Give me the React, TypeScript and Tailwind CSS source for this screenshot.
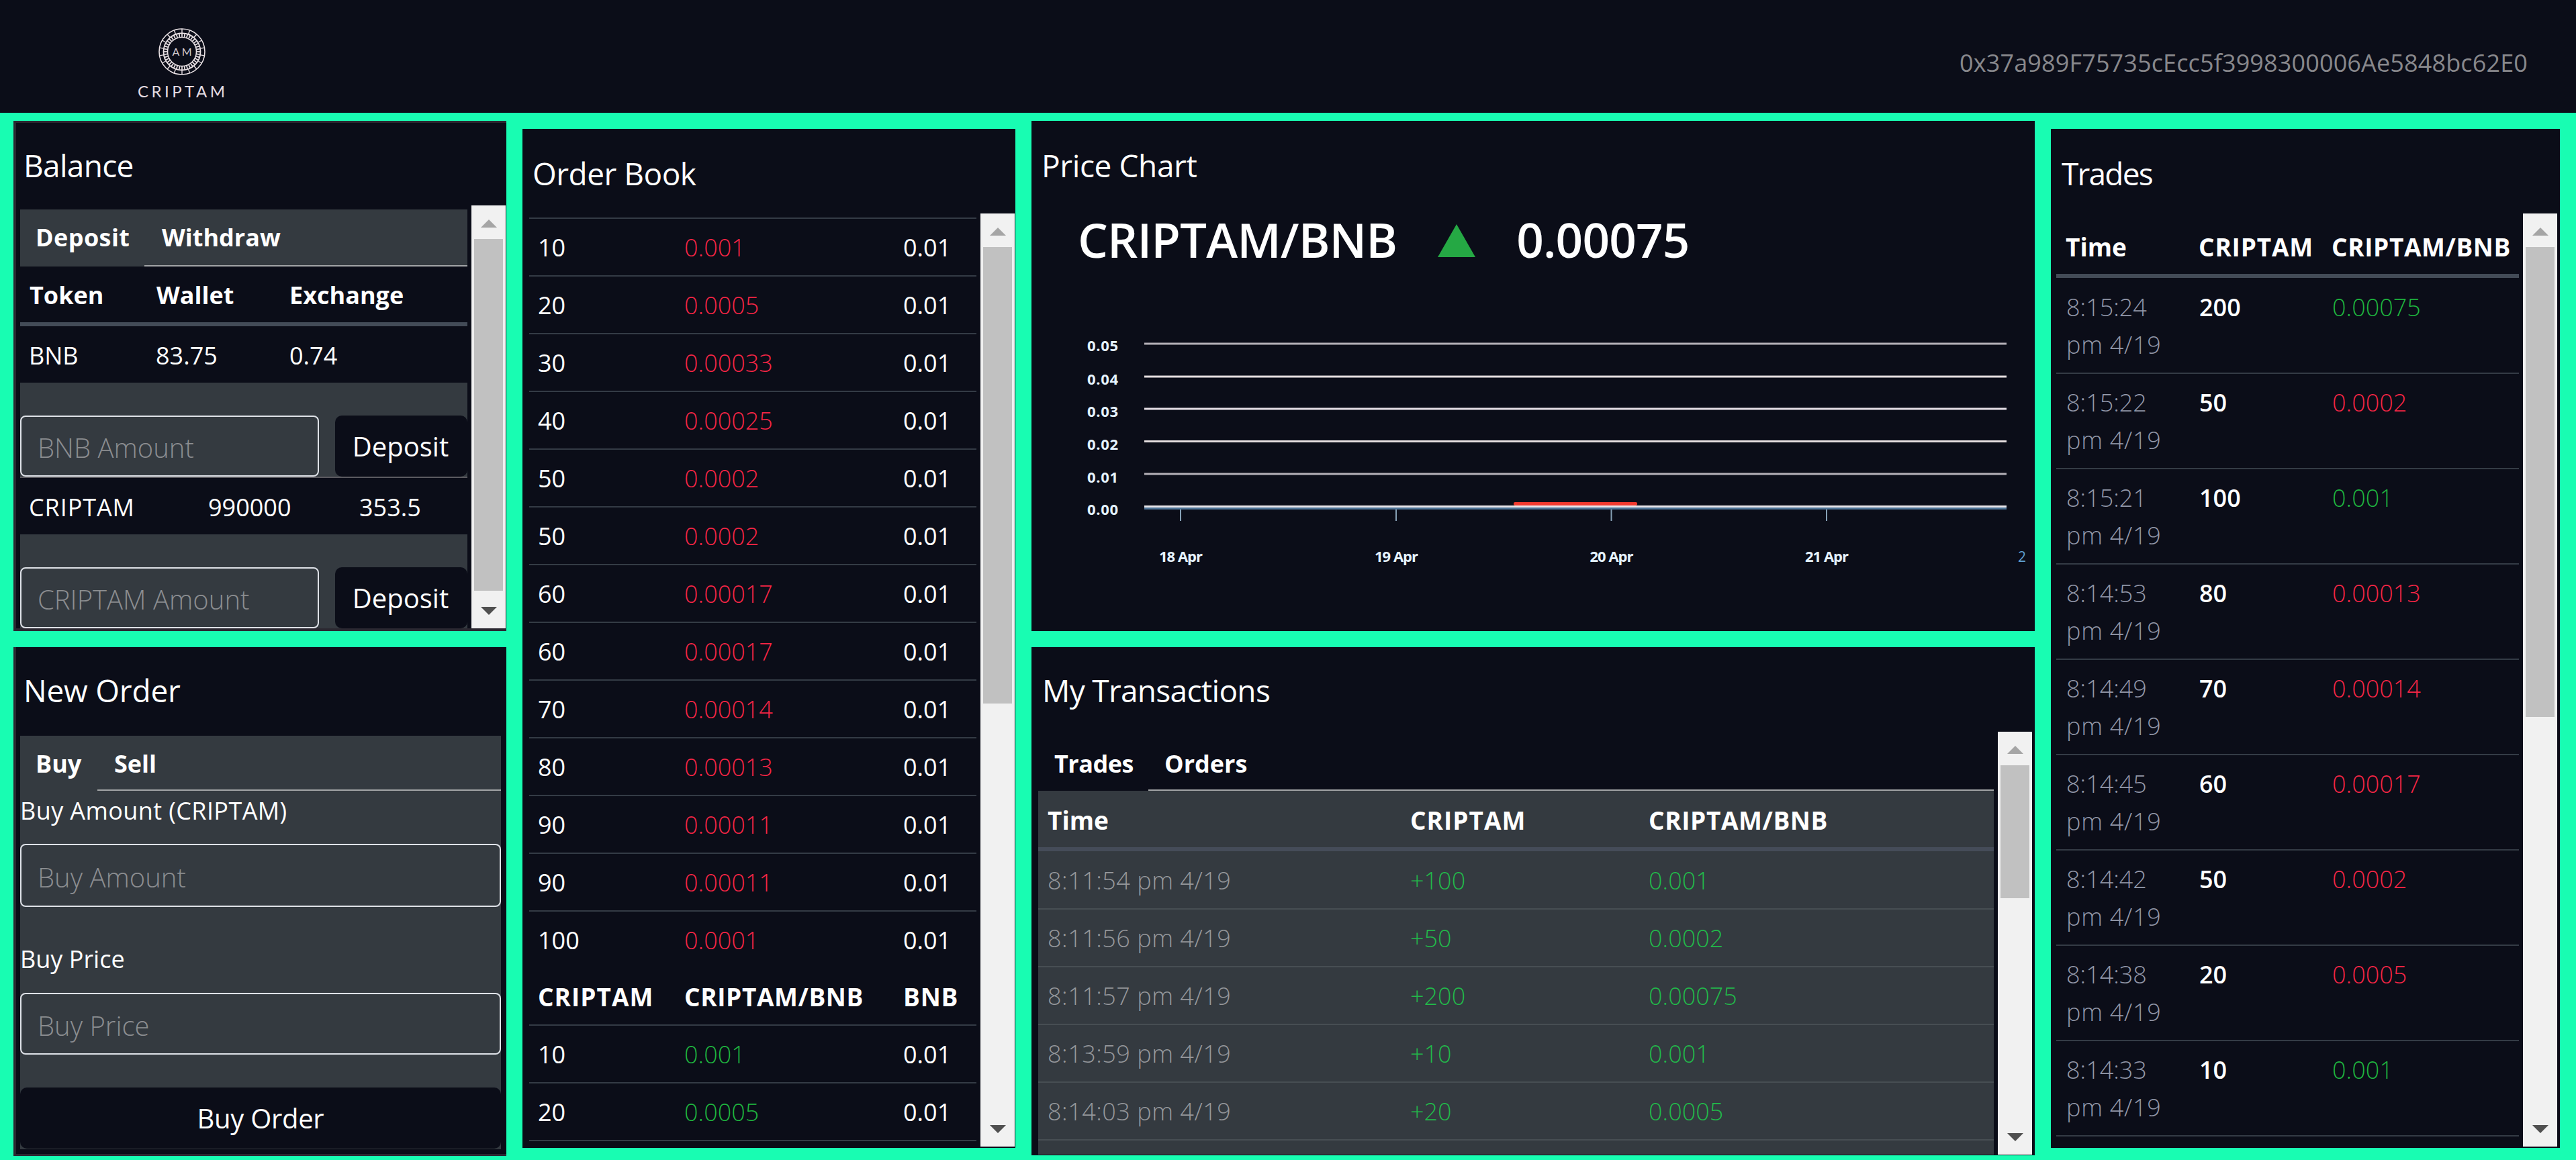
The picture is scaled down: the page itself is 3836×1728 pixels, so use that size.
import type { ReactNode } from "react";

type Side = "buy" | "sell";
type Level = [amount: string, price: string, total: string];

const asks: Level[] = [
  ["10", "0.001", "0.01"],
  ["20", "0.0005", "0.01"],
  ["30", "0.00033", "0.01"],
  ["40", "0.00025", "0.01"],
  ["50", "0.0002", "0.01"],
  ["50", "0.0002", "0.01"],
  ["60", "0.00017", "0.01"],
  ["60", "0.00017", "0.01"],
  ["70", "0.00014", "0.01"],
  ["80", "0.00013", "0.01"],
  ["90", "0.00011", "0.01"],
  ["90", "0.00011", "0.01"],
  ["100", "0.0001", "0.01"],
];

const bids: Level[] = [
  ["10", "0.001", "0.01"],
  ["20", "0.0005", "0.01"],
];

const trades: [time: string, amount: string, price: string, side: Side][] = [
  ["8:15:24", "200", "0.00075", "buy"],
  ["8:15:22", "50", "0.0002", "sell"],
  ["8:15:21", "100", "0.001", "buy"],
  ["8:14:53", "80", "0.00013", "sell"],
  ["8:14:49", "70", "0.00014", "sell"],
  ["8:14:45", "60", "0.00017", "sell"],
  ["8:14:42", "50", "0.0002", "sell"],
  ["8:14:38", "20", "0.0005", "sell"],
  ["8:14:33", "10", "0.001", "buy"],
];

const myTrades: [time: string, amount: string, price: string][] = [
  ["8:11:54 pm 4/19", "+100", "0.001"],
  ["8:11:56 pm 4/19", "+50", "0.0002"],
  ["8:11:57 pm 4/19", "+200", "0.00075"],
  ["8:13:59 pm 4/19", "+10", "0.001"],
  ["8:14:03 pm 4/19", "+20", "0.0005"],
];

const sideColor: Record<Side, string> = {
  buy: "font-light text-[#1fb53f]",
  sell: "font-light text-[#f52545]",
};

function Logo() {
  const spokes = Array.from({ length: 18 }, (_, i) => i * 20);
  const ticks = Array.from({ length: 40 }, (_, i) => i * 9);
  return (
    <svg width="140" height="124" viewBox="-70 -46 140 124" fill="none" stroke="#e9e1e4">
      <circle r="34" strokeWidth="1.6" />
      <circle r="27.5" strokeWidth="1.8" />
      <circle r="21.5" strokeWidth="1.6" />
      {spokes.map((a) => (
        <line key={a} x1="0" y1="-34" x2="0" y2="-28" strokeWidth="1.4" transform={`rotate(${a})`} />
      ))}
      {ticks.map((a) => (
        <line key={a} x1="0" y1="-27" x2="0" y2="-22" strokeWidth="1.7" transform={`rotate(${a})`} />
      ))}
      <text x="-14.5" y="5.5" textLength="29" fontSize="16" fontFamily="Lato, sans-serif" fill="#d6cdd3" stroke="none">
        AM
      </text>
      <text x="-66" y="67.5" textLength="130" fontSize="24" fontFamily="Lato, sans-serif" fill="#e4dce2" stroke="none">
        CRIPTAM
      </text>
    </svg>
  );
}

function Scrollbar({ thumb }: { thumb: string }) {
  return (
    <div className="flex w-[51px] shrink-0 flex-col bg-[#f1f1f1]">
      <div className="flex h-[50px] shrink-0 items-center justify-center pt-[3px]">
        <svg width="24" height="12" viewBox="0 0 24 12">
          <path d="M12 0 24 12H0Z" fill="#a5a5a5" />
        </svg>
      </div>
      <div className={`mx-1 bg-[#c1c1c1] ${thumb}`} />
      <div className="flex-1" />
      <div className="flex h-[52px] shrink-0 items-center justify-center">
        <svg width="24" height="12" viewBox="0 0 24 12">
          <path d="M12 12 24 0H0Z" fill="#505050" />
        </svg>
      </div>
    </div>
  );
}

function Card({ className, title, titleClass, children }: { className: string; title: string; titleClass: string; children: ReactNode }) {
  return (
    <section className={`flex flex-col overflow-hidden bg-[#0b0d18] ${className}`}>
      <h2 className={`h-[126px] shrink-0 text-[46px] leading-[60px] ${titleClass}`}>{title}</h2>
      {children}
    </section>
  );
}

function Tabs({ first, second, firstClass, secondClass, className }: { first: string; second: string; firstClass: string; secondClass: string; className: string }) {
  return (
    <div className={`flex shrink-0 font-bold leading-[84px] ${className}`}>
      <div className={firstClass}>{first}</div>
      <div className={`flex-1 border-b-2 border-[#a3a5a7] ${secondClass}`}>{second}</div>
    </div>
  );
}

const field =
  "min-w-0 rounded-[8px] border-2 border-[#dfe2e8] bg-transparent px-[24px] pt-1 text-[40px] font-light outline-none placeholder:text-[#8b8d90]";

function DepositForm({ token, className }: { token: string; className: string }) {
  return (
    <div className={`flex shrink-0 items-start justify-between bg-[#343a40] pt-[49px] ${className}`}>
      <input className={`h-[91px] w-[445px] ${field}`} placeholder={`${token} Amount`} />
      <button className="h-[91px] w-[197px] rounded-[10px] bg-[#0b0d18] pr-0.5 text-[40px] leading-[91px]">Deposit</button>
    </div>
  );
}

function BalanceCard() {
  return (
    <Card
      className="h-[760px] border-b-4 border-l-4 border-t-[3px] border-[#2b2831]"
      title="Balance"
      titleClass="-mt-[3px] pl-[11px] pt-[36px] tracking-[-0.7px]"
    >
      <div className="flex min-h-0 flex-1 pr-px">
        <div className="flex min-w-0 flex-1 flex-col overflow-hidden pl-1.5 pr-1.5 pt-1.5">
          <Tabs className="h-[85px] bg-[#343a40]" first="Deposit" second="Withdraw" firstClass="w-[185px] pl-[23px] tracking-[0.4px]" secondClass="pl-[26px]" />
          <div className="grid shrink-0 grid-cols-[189px_198px_1fr] border-b-[6px] border-[#434b57] pb-3 pl-[14px] pt-[15px] font-bold leading-[56px]">
            <div>Token</div>
            <div>Wallet</div>
            <div>Exchange</div>
          </div>
          <div className="grid shrink-0 grid-cols-[189px_199px_1fr] pb-3 pl-[13px] pt-4 leading-[56px]">
            <div>BNB</div>
            <div>83.75</div>
            <div>0.74</div>
          </div>
          <DepositForm token="BNB" className="h-[142px] border-b-2 border-[#5b5a60]" />
          <div className="grid shrink-0 grid-cols-[267px_225px_1fr] pb-3 pl-[13px] pt-4 leading-[56px]">
            <div className="tracking-[0.9px]">CRIPTAM</div>
            <div>990000</div>
            <div>353.5</div>
          </div>
          <DepositForm token="CRIPTAM" className="h-[142px]" />
        </div>
        <Scrollbar thumb="h-[524px]" />
      </div>
    </Card>
  );
}

function NewOrderCard() {
  return (
    <Card
      className="mt-6 h-[758px] border-b-[3px] border-l-4 border-[#2b2831]"
      title="New Order"
      titleClass="pl-[11px] pt-[34px] tracking-[-0.2px]"
    >
      <div className="ml-1.5 mr-2 mt-1.5 flex h-[616px] flex-col bg-[#343a40]">
        <Tabs className="h-[82px]" first="Buy" second="Sell" firstClass="w-[115px] pl-[23px]" secondClass="pl-[25px]" />
        <label className="mt-0.5 leading-[56px] tracking-[0.4px]">Buy Amount (CRIPTAM)</label>
        <input className={`mt-[21px] h-[94px] w-full shrink-0 ${field}`} placeholder="Buy Amount" />
        <label className="mt-[50px] leading-[56px]">Buy Price</label>
        <input className={`mt-[22px] h-[92px] w-full shrink-0 ${field}`} placeholder="Buy Price" />
        <button className="mt-[49px] h-[91px] shrink-0 rounded-[10px] bg-[#0b0d18] text-[40px] leading-[88px] tracking-[-0.3px]">Buy Order</button>
      </div>
    </Card>
  );
}

function OrderRow({ level, side }: { level: Level; side: Side }) {
  return (
    <div className="grid shrink-0 grid-cols-[218px_326px_1fr] border-t-2 border-[#343b45] pb-[13px] pl-[13px] pt-[15px] leading-[56px]">
      <div>{level[0]}</div>
      <div className={sideColor[side]}>{level[1]}</div>
      <div>{level[2]}</div>
    </div>
  );
}

function OrderBookCard() {
  return (
    <Card className="mt-3 h-[1518px]" title="Order Book" titleClass="pl-[15px] pt-[36px] tracking-[-0.5px]">
      <div className="flex h-[1390px] pr-px">
        <div className="flex flex-1 flex-col overflow-hidden pl-[10px] pr-1.5 pt-1.5">
          {asks.map((l, i) => (
            <OrderRow key={i} level={l} side="sell" />
          ))}
          <div className="grid shrink-0 grid-cols-[218px_326px_1fr] pb-[13px] pl-[13px] pt-[15px] text-[37px] font-bold leading-[56px]">
            <div className="tracking-[1px]">CRIPTAM</div>
            <div className="tracking-[0.6px]">CRIPTAM/BNB</div>
            <div className="tracking-[0.8px]">BNB</div>
          </div>
          {bids.map((l, i) => (
            <OrderRow key={i} level={l} side="buy" />
          ))}
          <div className="border-t-2 border-[#343b45]" />
        </div>
        <Scrollbar thumb="h-[680px]" />
      </div>
    </Card>
  );
}

function PriceChart() {
  const grid: [label: string, y: number, baseline: number, color: string][] = [
    ["0.05", 32, 43, "#b5b1b8"],
    ["0.04", 81, 93, "#e6dfe0"],
    ["0.03", 129, 141, "#e6dfe6"],
    ["0.02", 177.5, 189.5, "#e6dfe0"],
    ["0.01", 226, 239, "#b5b1b8"],
  ];
  const days: [label: string, x: number][] = [
    ["18 Apr", 164],
    ["19 Apr", 485],
    ["20 Apr", 805.5],
    ["21 Apr", 1126],
  ];
  return (
    <svg className="ml-[58px] mt-[74px]" width="1424" height="380" fontFamily="Open Sans, sans-serif" fontSize="22" fontWeight="700" fill="#e6f3ff">
      {grid.map(([label, y, baseline, color]) => (
        <g key={label}>
          <rect x="110" y={y - 1.5} width="1284" height="3" fill={color} />
          <text x="25" y={baseline} textLength="46">{label}</text>
        </g>
      ))}
      <text x="25" y="287" textLength="46">0.00</text>
      <rect x="110" y="273" width="1284" height="3" fill="#e9e6ea" />
      <rect x="110" y="276" width="1284" height="3" fill="#4d7397" />
      <rect x="660" y="268" width="184" height="5" rx="2" fill="#f23a2e" />
      {days.map(([label, x]) => (
        <g key={label}>
          <rect x={x - 1} y="279" width="2" height="17" fill="#86a0b5" />
          <text x={x - 32} y="357" textLength="65">{label}</text>
        </g>
      ))}
      <text x="1411" y="357" fontSize="21" fontWeight="400" fill="#5f9fd0">2</text>
    </svg>
  );
}

function PriceCard() {
  return (
    <Card className="h-[760px]" title="Price Chart" titleClass="pl-[15px] pt-[36px] tracking-[-0.4px]">
      <div className="flex h-[100px] items-center pl-[69px] pt-0.5 text-[71px] font-semibold leading-[96px]">
        <span className="tracking-[-0.9px]">CRIPTAM/BNB</span>
        <svg className="ml-[61px] mt-[3px]" width="56" height="49" viewBox="0 0 56 49">
          <path d="M28 0 56 49H0Z" fill="#25a844" />
        </svg>
        <span className="ml-[61px] tracking-[-0.8px]">0.00075</span>
      </div>
      <PriceChart />
    </Card>
  );
}

function TransactionsCard() {
  return (
    <Card className="mt-6 h-[757px]" title="My Transactions" titleClass="pl-[16px] pt-[34px] tracking-[-0.7px]">
      <div className="flex h-[630px] pr-1">
        <div className="flex flex-1 flex-col overflow-hidden pl-[10px] pr-1.5 pt-1.5">
          <Tabs className="h-[82px]" first="Trades" second="Orders" firstClass="w-[164px] pl-6 tracking-[-0.5px]" secondClass="pl-[24px]" />
          <div className="flex-1 bg-[#343a40]">
            <div className="grid grid-cols-[540px_355px_1fr] border-b-[6px] border-[#454c59] pb-3 pl-[14px] pt-4 text-[37px] font-bold leading-[56px]">
              <div>Time</div>
              <div className="tracking-[1px]">CRIPTAM</div>
              <div className="tracking-[0.6px]">CRIPTAM/BNB</div>
            </div>
            {myTrades.map(([time, amount, price], i) => (
              <div key={time} className={`grid grid-cols-[540px_355px_1fr] border-[#474e53] pb-[13px] pl-[14px] leading-[56px] ${i ? "border-t-2 pt-[15px]" : "pt-4"}`}>
                <div className="font-light tracking-[0.5px] text-[#95979b]">{time}</div>
                <div className="font-light text-[#22b84a]">{amount}</div>
                <div className="font-light text-[#22b84a]">{price}</div>
              </div>
            ))}
            <div className="border-t-2 border-[#474e53]" />
          </div>
        </div>
        <Scrollbar thumb="h-[198px]" />
      </div>
    </Card>
  );
}

function TradesCard() {
  return (
    <Card className="mt-3 h-[1518px]" title="Trades" titleClass="pl-[16px] pt-[36px] tracking-[-1.8px]">
      <div className="flex h-[1390px] pr-1">
        <div className="flex flex-1 flex-col overflow-hidden pl-2 pr-1.5 pt-[7px]">
          <div className="grid shrink-0 grid-cols-[198px_198px_1fr] border-b-[6px] border-[#434b57] pb-3 pl-[14px] pt-[15px] text-[37px] font-bold leading-[56px]">
            <div>Time</div>
            <div className="tracking-[0.8px]">CRIPTAM</div>
            <div className="tracking-[0.6px]">CRIPTAM/BNB</div>
          </div>
          {trades.map(([time, amount, price, side], i) => (
            <div key={time} className={`grid shrink-0 grid-cols-[198px_198px_1fr] border-[#343b45] pb-[13px] pl-[15px] leading-[56px] ${i ? "border-t-2 pt-[15px]" : "pt-4"}`}>
              <div className="font-light text-[#9297a8]">
                {time}
                <br />
                <span className="tracking-[0.7px]">pm 4/19</span>
              </div>
              <div className="font-semibold">{amount}</div>
              <div className={sideColor[side]}>{price}</div>
            </div>
          ))}
          <div className="border-t-2 border-[#343b45]" />
        </div>
        <Scrollbar thumb="h-[700px]" />
      </div>
    </Card>
  );
}

export default function App() {
  return (
    <div className="flex h-[1728px] w-[3836px] flex-col overflow-hidden bg-[#18fdb2] font-['Open_Sans',sans-serif] text-[36px] text-white">
      <header className="flex h-[168px] shrink-0 justify-between bg-[#0b0d18] pl-[201px] pr-[72px]">
        <div className="pt-[31px]">
          <Logo />
        </div>
        <div className="pt-[66px] leading-[56px] tracking-[0.13px] text-[#88888c]">0x37a989F75735cEcc5f3998300006Ae5848bc62E0</div>
      </header>
      <main className="flex items-start gap-6 pl-5 pt-3">
        <div className="w-[734px]">
          <BalanceCard />
          <NewOrderCard />
        </div>
        <div className="w-[734px]">
          <OrderBookCard />
        </div>
        <div className="w-[1494px]">
          <PriceCard />
          <TransactionsCard />
        </div>
        <div className="w-[758px]">
          <TradesCard />
        </div>
      </main>
    </div>
  );
}
